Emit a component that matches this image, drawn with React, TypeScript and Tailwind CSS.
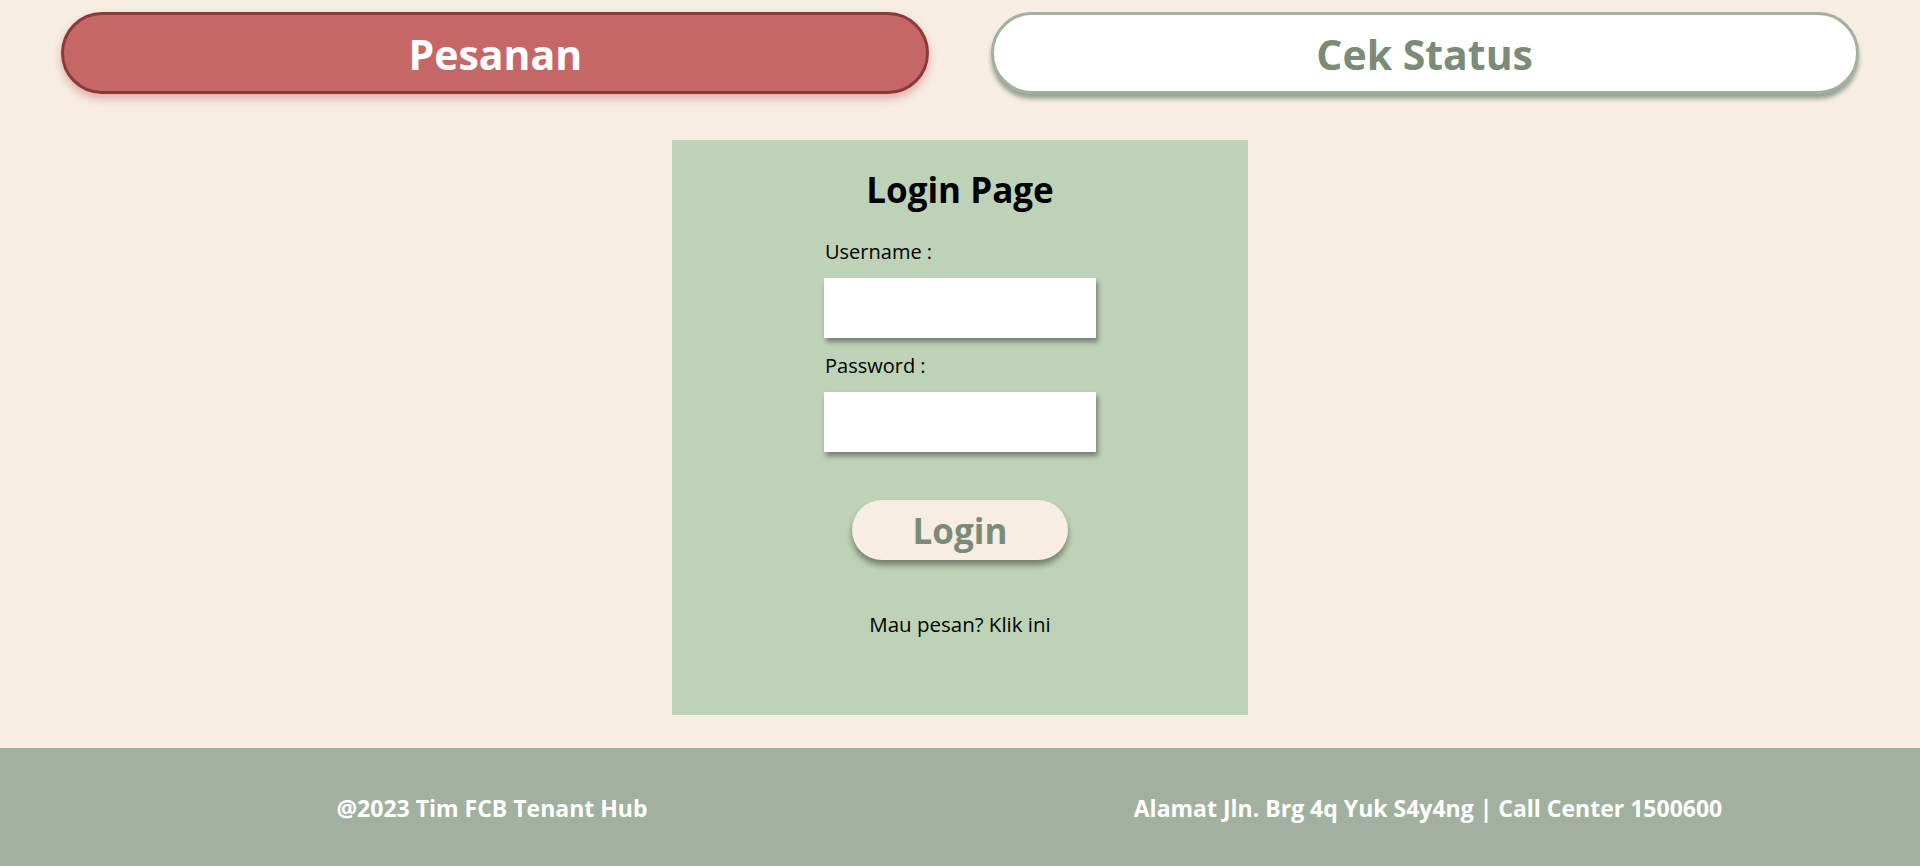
import React from "react";

export default function App() {
  const font = { fontFamily: '"Open Sans", "Noto Sans", Arial, sans-serif' };
  return (
    <div className="min-h-[866px] w-full bg-[#F7EDE3] flex flex-col" style={font}>
      <div className="flex justify-evenly pt-3">
        <button className="w-[868px] h-[82px] pt-[3px] rounded-full border-[3px] border-[#8B3A3A] bg-[#C66767] text-white font-bold text-[41px] leading-none shadow-[0_5px_8px_rgba(198,103,103,0.45)] flex items-center justify-center">
          Pesanan
        </button>
        <button className="w-[868px] h-[82px] pt-[3px] rounded-full border-[3px] border-[#A2B19F] bg-white text-[#7A8B78] font-bold text-[41px] leading-none shadow-[0_5px_4px_rgba(122,139,120,0.75)] flex items-center justify-center">
          Cek Status
        </button>
      </div>

      <div className="mt-[46px] mx-auto w-[576px] h-[575px] bg-[#BED2B7] flex flex-col items-center">
        <h1 className="pt-[30px] leading-[40px] text-[35px] font-bold text-black">Login Page</h1>
        <div className="w-[272px] mt-[30px] flex flex-col">
          <label className="pl-[1px] leading-[24px] text-[20px] text-black">Username :</label>
          <input className="mt-[14px] h-[60px] w-[272px] bg-white outline-none shadow-[2px_4px_5px_rgba(0,0,0,0.4)]" />
          <label className="mt-[16px] pl-[1px] leading-[24px] text-[20px] text-black">Password :</label>
          <input type="password" className="mt-[14px] h-[60px] w-[272px] bg-white outline-none shadow-[2px_4px_5px_rgba(0,0,0,0.4)]" />
        </div>
        <button className="mt-[48px] w-[216px] h-[60px] rounded-full bg-[#F7EDE3] text-[#7A8B78] font-bold text-[35px] leading-none shadow-[0_5px_6px_rgba(0,0,0,0.4)] flex items-center justify-center">
          Login
        </button>
        <p className="mt-[52px] leading-[24px] text-[20.5px] text-black">Mau pesan? Klik ini</p>
      </div>

      <footer className="mt-[33px] h-[118px] pt-[2px] bg-[#A2B19F] grid grid-cols-2 items-center px-6 text-white font-bold text-[23px]">
        <div className="text-center">@2023 Tim FCB Tenant Hub</div>
        <div className="text-center">Alamat Jln. Brg 4q Yuk S4y4ng | Call Center 1500600</div>
      </footer>
    </div>
  );
}
